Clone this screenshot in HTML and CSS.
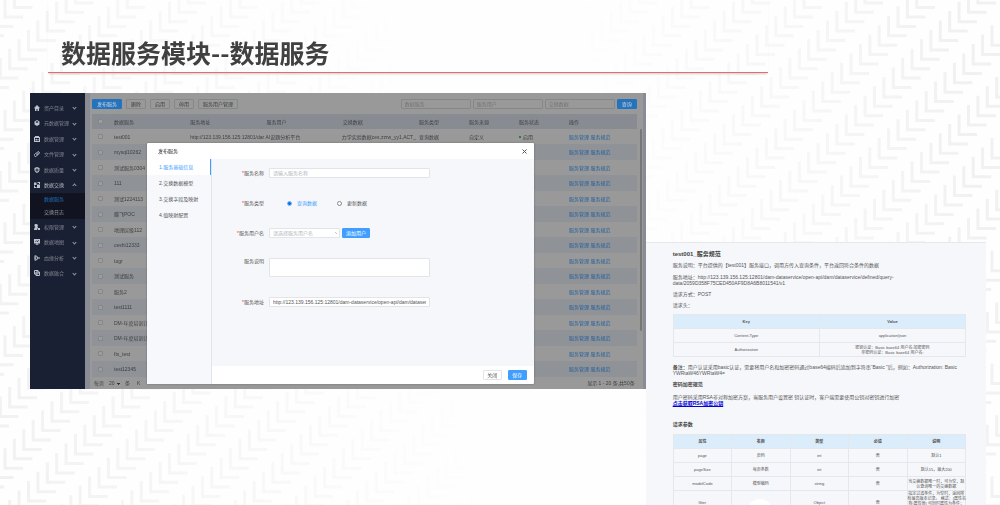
FILE: index.html
```html
<!DOCTYPE html>
<html lang="zh-CN">
<head>
<meta charset="utf-8">
<title>数据服务模块--数据服务</title>
<link rel="stylesheet" href="styles.css">
</head>
<body>
<svg class="texture" aria-hidden="true"><path id="weave"/></svg>
<div class="slide">
<h1 class="slide-title">数据服务模块--数据服务</h1>
<div class="stage">
<section class="app">
  <nav class="sidebar">
    <a href="#" class="item"><svg viewBox="0 0 12 12"><path d="M0 6 6 0l6 6-1 1-1-1v6H7V8H5v4H2V6L1 7z"/></svg><span>资产目录</span><i class="chev"></i></a>
    <a href="#" class="item"><svg viewBox="0 0 12 12"><path fill-rule="evenodd" d="M6 0 11 3v6L6 12 1 9V3zM6 2 3 4l3 2 3-2z"/></svg><span>元数据管理</span><i class="chev"></i></a>
    <a href="#" class="item"><svg viewBox="0 0 12 12"><path fill-rule="evenodd" d="M2 0h8v2h2v10H0V2h2zM2 4v6h8V4zM3 6h3v3H3zM7 6h2v3H7z"/></svg><span>数据管理</span><i class="chev"></i></a>
    <a href="#" class="item"><svg viewBox="0 0 12 12"><path class="line" d="M3 6 7 2a2 2 0 0 1 3 3L5 10a2 2 0 0 1-4-3l2-2M5 8l4-4"/></svg><span>文件管理</span><i class="chev"></i></a>
    <a href="#" class="item"><svg viewBox="0 0 12 12"><path fill-rule="evenodd" d="M6 0 11 2v5q-1 3-5 5-4-2-5-5V2zM6 3a3 3 0 1 0 0 6 3 3 0 0 0 0-6zM5 5h2v2H5z"/></svg><span>数据质量</span><i class="chev"></i></a>
    <a href="#" class="item open"><svg viewBox="0 0 12 12"><path d="M0 1h5v5H0zM7 0h5v4h-2V2H7zM0 7h2v3h3v2H0zM6 5h6v7H6z"/></svg><span>数据交换</span><i class="chev up"></i></a>
    <div class="sub"><a href="#" class="on">数据服务</a><a href="#">交换日志</a></div>
    <a href="#" class="item"><svg viewBox="0 0 12 12"><path d="M5 0a3 3 0 0 1 2 5l1 2-2 5H0q0-5 3-6a3 3 0 0 1 2-6zM8 8h4v4H8z"/></svg><span>权限管理</span><i class="chev"></i></a>
    <a href="#" class="item"><svg viewBox="0 0 12 12"><path fill-rule="evenodd" d="M0 0h12v9H7v2h2v1H3v-1h2V9H0zM2 5v1l3-2 2 2 3-3V2L7 4 5 3z"/></svg><span>数据地图</span><i class="chev"></i></a>
    <a href="#" class="item"><svg viewBox="0 0 12 12"><path class="line" d="M2 1v10M2 2h3l3 4-3 4H2M8 6h4M1 6h4"/></svg><span>血缘分析</span><i class="chev"></i></a>
    <a href="#" class="item"><svg viewBox="0 0 12 12"><path class="line" d="M1 1h7v7H1zM4 4h7v7H4z"/></svg><span>数据融合</span><i class="chev"></i></a>
  </nav>
  <div class="main">
    <div class="toolbar">
      <button class="btn primary">发布服务</button><button class="btn">删除</button><button class="btn">启用</button><button class="btn">停用</button><button class="btn">服务用户管理</button>
      <div class="search">
        <input aria-label="数据服务" placeholder="数据服务"><input aria-label="服务用户" placeholder="服务用户"><input aria-label="交换数据" placeholder="交换数据"><button class="btn primary">查询</button>
      </div>
    </div>
    <table class="grid">
      <colgroup><col class="c-check"><col class="c-wide"><col class="c-wide"><col class="c-wide"><col class="c-wide"><col class="c-mid"><col class="c-mid"><col class="c-mid"><col class="c-ops"></colgroup>
      <thead><tr><th><input type="checkbox" aria-label="全选"></th><th>数据服务</th><th>服务地址</th><th>服务用户</th><th>交换数据</th><th>服务类型</th><th>服务来源</th><th>服务状态</th><th>操作</th></tr></thead>
      <tbody id="rows"></tbody>
    </table>
    <div class="pager">
      <label for="size">每页</label><select id="size"><option>20</option></select><span>条</span>
      <button aria-label="首页">K</button>
      <span class="total">显示 1 - 20 条,共50条</span>
    </div>
  </div>
  <div class="rail"><span></span></div>

  <div class="dialog" role="dialog" aria-labelledby="dlg">
    <header><h2 id="dlg">发布服务</h2><button class="close" aria-label="关闭窗口"><svg viewBox="0 0 10 10"><path d="M1 1 9 9M9 1 1 9"/></svg></button></header>
    <div class="dialog-body">
      <nav class="steps"><a href="#" class="on">1.服务基础信息</a><a href="#">2.交换数据模型</a><a href="#">3.交换字段及映射</a><a href="#">4.值映射配置</a></nav>
      <div class="pane">
        <form class="form">
          <label for="name"><b>*</b>服务名称</label><input id="name" placeholder="请输入服务名称">
          <span class="lbl"><b>*</b>服务类型</span>
          <div class="radios"><label class="on"><input type="radio" name="kind" checked>查询数据</label><label><input type="radio" name="kind">更新数据</label></div>
          <label for="user"><b>*</b>服务用户名</label>
          <div class="pick"><select id="user"><option>请选择服务用户名</option></select><button type="button" class="blue">添加用户</button></div>
          <label for="note" class="top">服务说明</label><textarea id="note"></textarea>
          <label for="url"><b>*</b>服务地址</label><input id="url" value="http://123.139.156.125:12801/dam-dataservice/open-api/dam/dataservice/de">
        </form>
        <footer><button>关闭</button><button class="blue">保存</button></footer>
      </div>
    </div>
  </div>
</section>

<article class="doc">
  <h2>test001_服务规范</h2>
  <p>服务说明：平台提供的【test001】服务接口，调用方传入查询条件，平台返回符合条件的数据</p>
  <p>服务地址：http://123.139.156.125:12801/dam-dataservice/open-api/dam/dataservice/defined/query-<br>data/2059D358F75CED450AF9D8A6B8011541/v1</p>
  <p>请求方式：POST</p>
  <p>请求头：</p>
  <table>
    <thead><tr><th>Key</th><th>Value</th></tr></thead>
    <tbody><tr><td>Content-Type</td><td>application/json</td></tr>
    <tr><td>Authorization</td><td>密钥认证：Basic base64 用户名:加密密码<br>非密码认证：Basic base64 用户名:</td></tr></tbody>
  </table>
  <p class="remark"><b>备注：</b>用户认证采用basic认证，需要将用户名和加密密码通过base64编码后追加到字符串“Basic ”后，例如：Authorization: Basic<br>YWRtaW46YWRtaW4=</p>
  <h3>密码加密规范</h3>
  <p class="rsa">用户密码采用RSA非对称加密方案，当服务用户设置密 钥认证时，客户端需要使用公钥对密钥进行加密<br><a href="#">点击获取RSA加密公钥</a></p>
  <h3>请求参数</h3>
  <table>
    <thead><tr><th>属性</th><th>名称</th><th>类型</th><th>必填</th><th>说明</th></tr></thead>
    <tbody><tr><td>page</td><td>页码</td><td>int</td><td>否</td><td>默认1</td></tr>
    <tr><td>pageSize</td><td>每页条数</td><td>int</td><td>否</td><td>默认15，最大200</td></tr>
    <tr><td>modelCode</td><td>模型编码</td><td>string</td><td>否</td><td>当交换数据唯一时，可为空，默<br>认查询唯一的交换数据</td></tr>
    <tr class="last"><td>filter</td><td></td><td>Object</td><td>否</td><td>指定过滤条件，为空时，返回所<br>有最高版本记录。 格式：{属性名<br>称:属性值} 可同时属性为条件；</td></tr></tbody>
  </table>
  <span class="bubble"></span>
</article>
</div>
</div>
<script src="main.js"></script>
</body>
</html>
```

FILE: styles.css
```css
* { box-sizing: border-box; }
body { margin: 0; background: #fefefe; font-family: "Liberation Sans", "Noto Sans CJK SC", sans-serif; font-size: 5px; line-height: 6px; color: #555; }
button, input, select, textarea { font: inherit; color: inherit; margin: 0; padding: 0; border: 1px solid #e2e4e8; border-radius: 1px; background: #fff; appearance: none; }
a { color: inherit; text-decoration: none; }
h1, h2, h3, p { margin: 0; }

.texture { position: fixed; inset: 0; z-index: -1; width: 100%; height: 100%; mask-image: linear-gradient(80deg, #000 0%, transparent 45%, transparent 60%, #000 95%); }
.texture path { fill: none; stroke: #f1f1f1; stroke-width: 3; }

.slide { height: 100vh; overflow: hidden; }
.slide-title { width: 72%; margin-left: 48px; padding: 34px 0 1px 13px; font-family: "Noto Sans CJK SC", sans-serif; font-size: 25px; line-height: 37px; font-weight: 700; color: #404040; border-bottom: 1px solid #e96a6c; box-shadow: 0 2px 2px -1px #ccc; }
.stage { display: flex; align-items: flex-start; padding: 20px 14px 0 30px; }

.app { position: relative; width: 64.4%; flex: none; display: flex; background: #999; }
.sidebar { width: 55px; flex: none; padding-top: 7px; background: #1a2033; color: #81858f; }
.item { display: flex; align-items: center; height: 15px; padding: 0 9px 0 4px; gap: 4px; }
.item:nth-of-type(even) { height: 16px; }
.item svg { width: 6px; height: 6px; fill: #bfc3ca; }
.item .line { fill: none; stroke: #bfc3ca; stroke-width: 2; }
.item.open { color: #b6bac2; }
.item span { flex: 1; white-space: nowrap; }
.chev { width: 3px; height: 3px; border: solid #999; border-width: 0 1px 1px 0; transform: rotate(45deg); }
.chev.up { transform: rotate(225deg); }
.sub { background: #111420; color: #9a9ca3; }
.sub a { display: block; padding-left: 14px; line-height: 13px; }
.sub .on { color: #1f6fbd; }

.main { flex: 1; min-width: 0; border-left: 5px solid #8a8c95; padding: 6px 3px 0 2px; color: #3f4043; }
.toolbar { display: flex; gap: 4px; margin-bottom: 5px; }
.btn { height: 10px; padding: 0 4px; line-height: 8px; background: #999; border-color: #868789; border-radius: 1px; white-space: nowrap; }
.btn.primary { background: #2673bd; border-color: #2673bd; color: #cfd9e3; }
.search { display: flex; flex: 1; justify-content: flex-end; gap: 2px; }
.search input { width: 70px; height: 10px; padding-left: 3px; background: #999; border-color: #868789; }
.search input::placeholder { color: #747577; }
.grid { width: 100%; table-layout: fixed; border-collapse: collapse; }
.c-check { width: 18px; }
.c-wide { width: 14%; }
.c-mid { width: 50px; }
.grid th, .grid td { height: 15px; padding: 0 0 0 4px; text-align: left; white-space: nowrap; font-weight: 400; }
.grid td:nth-child(4), .grid td:nth-child(5) { padding-left: 3px; }
.grid th { background: #888b92; }
.grid tr:nth-child(even) td { height: 16px; background: #8f9296; }
.grid input { display: block; width: 5px; height: 5px; margin-left: 2px; background: #9d9d9d; border-color: #858688; }
.grid a { color: #245f9c; }
.dot { display: inline-block; width: 2px; height: 2px; margin: 0 2px 1px 0; border-radius: 1px; background: #086f38; }
.pager { display: flex; align-items: center; gap: 4px; height: 12px; padding: 0 2px; }
.pager select, .pager button { border: 0; background: transparent; }
.pager select { width: 13px; padding-left: 1px; background: linear-gradient(#333, #333) 9px 3px / 3px 1px no-repeat, linear-gradient(#333, #333) 10px 4px / 1px 1px no-repeat; }
.pager button { margin-left: 3px; }
.total { margin-left: auto; }
.rail { width: 6px; padding-top: 36px; border-right: 3px solid #8a8c95; }
.rail span { display: block; width: 2px; height: 202px; background: #777; border-radius: 1px; }

.dialog { position: absolute; left: 117px; right: 112px; top: 50px; bottom: 5px; display: flex; flex-direction: column; background: #fff; border-radius: 1px; box-shadow: 0 0 2px #666; }
.dialog header { display: flex; justify-content: space-between; align-items: center; height: 16px; padding: 0 7px 0 11px; }
.dialog h2 { font-size: 5px; font-weight: 400; color: #222; }
.close { width: 5px; height: 5px; border: 0; display: flex; }
.close svg { width: 5px; height: 5px; stroke: #555; stroke-width: 2; }
.dialog-body { flex: 1; display: flex; }
.steps { width: 65px; background: #f6f8fb; border-right: 1px solid #e2e5e9; }
.steps a { display: block; line-height: 16px; padding-left: 12px; white-space: nowrap; }
.steps .on { color: #409eff; background: #fff; border-right: 1px solid #409eff; }
.pane { flex: 1; display: flex; flex-direction: column; }
.form { flex: 1; display: grid; grid-template-columns: 52px 161px; grid-template-rows: 10px 10px 10px 19px 10px; column-gap: 5px; row-gap: 20px; align-items: center; padding-top: 9px; background: #f5f7fa; }
.form > label, .lbl { text-align: right; white-space: nowrap; }
.form b { color: #e33; font-weight: 400; }
.form > input { height: 10px; padding: 0 3px; width: 100%; }
.form > .top { align-self: start; }
.form textarea { width: 100%; height: 19px; resize: none; }
.form ::placeholder, .form select { color: #b3b6bc; }
.radios { display: flex; gap: 20px; padding-left: 18px; }
.radios label { display: flex; align-items: center; gap: 5px; }
.radios .on { color: #409eff; }
.radios input { width: 5px; height: 5px; border: 1px solid #888; border-radius: 50%; }
.radios input:checked { background: #0a6fe0; border-color: #7db8f5; }
.pick { display: flex; gap: 2px; }
.pick select { width: 71px; height: 10px; padding-left: 3px; background: linear-gradient(45deg, transparent 48%, #c0c4cc 48% 60%, transparent 60%) 65px 3px / 2px 2px no-repeat, #fff; }
.blue { width: 28px; height: 10px; line-height: 8px; color: #fff; background: #409eff; border-color: #409eff; }
.pane footer { display: flex; justify-content: flex-end; align-items: center; gap: 6px; height: 18px; padding-right: 7px; }
.pane footer button { width: 19px; height: 10px; line-height: 8px; }

.doc { position: relative; flex: 1; min-width: 0; margin-top: 149px; padding: 7px 20px 0 27px; background: #f5f7fa; border-top: 1px solid #e6e8ec; white-space: nowrap; }
.doc h2 { font-size: 6px; line-height: 8px; margin-bottom: 5px; color: #444; }
.doc p { margin-bottom: 6px; line-height: 5px; }
.doc p + p { line-height: 6px; margin-bottom: 5px; }
.doc p + table { margin-top: 6px; }
.doc h3 { font-size: 5px; line-height: 7px; font-weight: 700; color: #444; margin-bottom: 6px; }
.doc .remark { margin: 7px 0 5px; line-height: 6px; }
.doc .rsa { margin-bottom: 15px; line-height: 6px; }
.doc .rsa a { color: #0000d8; font-weight: 700; text-decoration: underline; }
.doc table { width: 100%; table-layout: fixed; border-collapse: collapse; font-size: 4px; line-height: 5px; text-align: center; }
.doc th, .doc td { height: 14px; padding: 0; border: 1px solid #e4e8ed; }
.doc th { background: #dbecfb; }
.doc .last td { height: 24px; }
.doc .last td:last-child { vertical-align: top; }
.bubble { position: absolute; left: 101px; top: 256px; width: 26px; height: 26px; border-radius: 50%; background: #fff; }
```

FILE: main.js
```js
const names = ['test001', 'mysql10262', '测试服务0304', '111', '测试1224113', '腾飞POC', '地理层级112', 'ceshi12333', 'togr', '测试服务', '服务2', 'test1111', 'DM-年度培训计划', 'DM-年度培训计划', 'ftx_test', 'test12345'];
const first = ['http://123.139.156.125:12801/dar', 'AI说题分析平台', '力学实验数据ces,zzrw_yy1,ACT_', '查询数据', '自定义', '<i class="dot"></i>启用'];
document.getElementById('rows').innerHTML = names.map((name, i) => {
  const cells = i === 0 ? first : Array(6).fill('');
  return `<tr><td><input type="checkbox" aria-label="${name}"></td><td>${name}</td>${cells.map(c => `<td>${c}</td>`).join('')}<td><a href="#">服务管理</a> <a href="#">服务规范</a></td></tr>`;
}).join('');

// Woven background: rows of L strokes stepping down the diagonal.
const unit = 9.4;
let d = '';
for (let band = -40; band < 60; band++) {
  for (let step = -200; step < 300; step++) {
    const x = 5 + (5.5 * band - step) * unit;
    const y = 17 + (0.5 * band + step) * unit;
    if (x > -30 && x < innerWidth + 30 && y > -30 && y < innerHeight + 30) d += `M${x.toFixed(1)} ${(y - 20).toFixed(1)}v20h18`;
  }
}
document.getElementById('weave').setAttribute('d', d);
```
